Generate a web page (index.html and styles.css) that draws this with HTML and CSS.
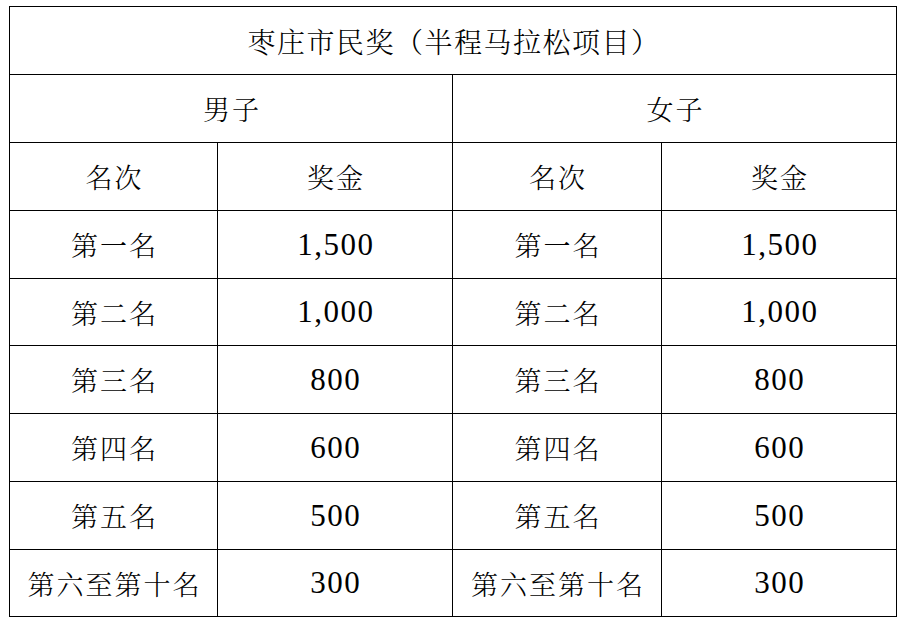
FILE: index.html
```html
<!DOCTYPE html>
<html lang="zh-CN">
<head>
<meta charset="utf-8">
<title>枣庄市民奖（半程马拉松项目）</title>
<link rel="stylesheet" href="styles.css">
</head>
<body>
<table class="prize">
  <colgroup>
    <col class="c-rank"><col class="c-money"><col class="c-rank2"><col class="c-money">
  </colgroup>
  <tr class="r"><td colspan="4" class="cjk title">枣庄市民奖（半程马拉松项目）</td></tr>
  <tr class="r"><td colspan="2" class="cjk">男子</td><td colspan="2" class="cjk">女子</td></tr>
  <tr class="r"><td class="cjk">名次</td><td class="cjk">奖金</td><td class="cjk">名次</td><td class="cjk">奖金</td></tr>
  <tr class="r"><td class="cjk">第一名</td><td class="num">1,500</td><td class="cjk">第一名</td><td class="num">1,500</td></tr>
  <tr class="r s"><td class="cjk">第二名</td><td class="num">1,000</td><td class="cjk">第二名</td><td class="num">1,000</td></tr>
  <tr class="r"><td class="cjk">第三名</td><td class="num">800</td><td class="cjk">第三名</td><td class="num">800</td></tr>
  <tr class="r"><td class="cjk">第四名</td><td class="num">600</td><td class="cjk">第四名</td><td class="num">600</td></tr>
  <tr class="r"><td class="cjk">第五名</td><td class="num">500</td><td class="cjk">第五名</td><td class="num">500</td></tr>
  <tr class="r s"><td class="cjk">第六至第十名</td><td class="num">300</td><td class="cjk">第六至第十名</td><td class="num">300</td></tr>
</table>
</body>
</html>
```

FILE: styles.css
```css
html, body {
  margin: 0;
  padding: 0;
  background: #ffffff;
}
body {
  padding: 6px 0 0 9px;
}
.prize {
  border-collapse: collapse;
  table-layout: fixed;
  width: 888px;
  color: #000;
}
.c-rank { width: 208px; }
.c-rank2 { width: 209px; }
.c-money { width: 235px; }
.prize td {
  border: 1px solid #000;
  padding: 0;
  text-align: center;
  vertical-align: middle;
  white-space: nowrap;
}
.r { height: 68px; }
.r.s { height: 67px; }
.cjk {
  font-family: "Noto Serif CJK SC", "Noto Sans CJK SC", sans-serif;
  font-weight: 300;
  font-size: 27px;
  letter-spacing: 2px;
  text-indent: 2px;
  text-spacing-trim: space-all;
  font-variant-east-asian: full-width;
}
.title {
  font-size: 28px;
  letter-spacing: 1.5px;
}
.num {
  font-family: "Liberation Serif", "DejaVu Serif", serif;
  font-size: 31px;
  letter-spacing: 1.5px;
  text-indent: 1.5px;
}
```
